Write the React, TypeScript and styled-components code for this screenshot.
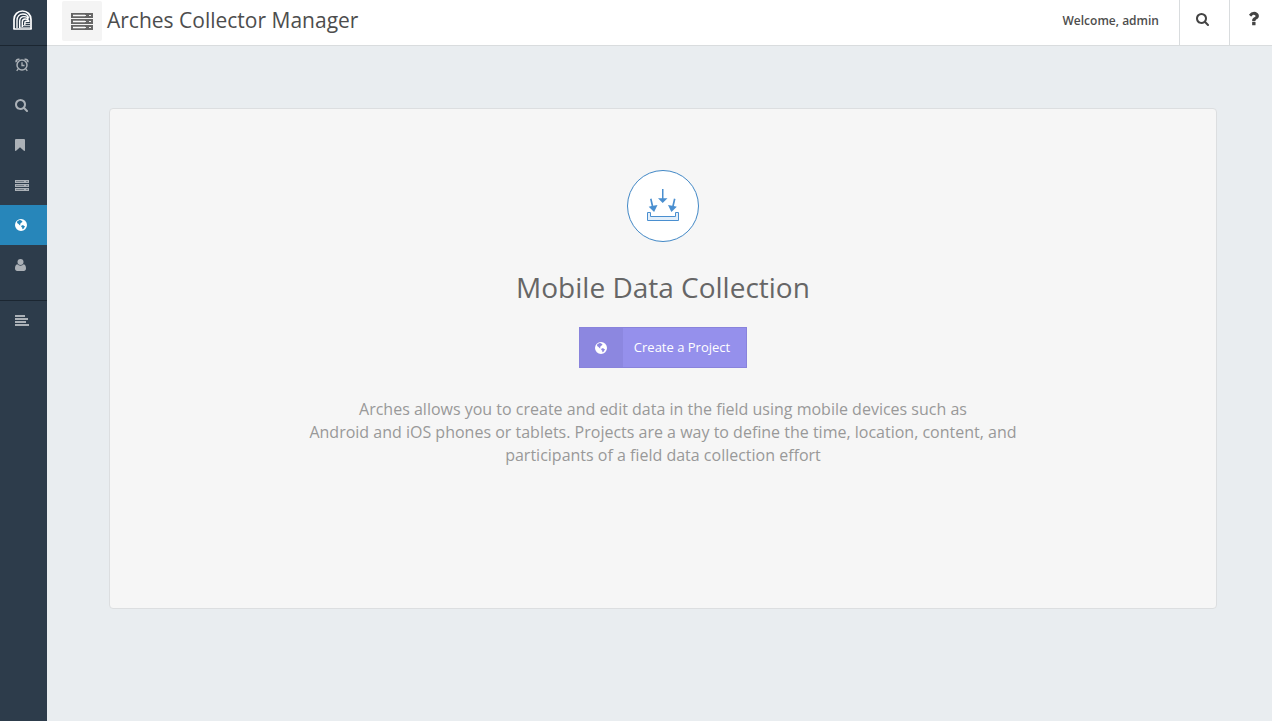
import React from "react";
import styled, { createGlobalStyle } from "styled-components";

const GlobalStyle = createGlobalStyle`
  *, *::before, *::after { box-sizing: border-box; }
  body {
    margin: 0;
    background: #e9edf0;
    color: #4d4d4d;
    font-family: "Open Sans", "Noto Sans", sans-serif;
    font-size: 13px;
  }
`;

const Shell = styled.div`
  display: flex;
  min-height: 100vh;
`;

const Sidebar = styled.nav`
  flex: 0 0 47px;
  background: #2d3c4b;
  color: #abb1b7;
`;

const Brand = styled.a`
  display: flex;
  height: 45px;
  padding: 10px 0 0 13px;
  color: #ffffff;
`;

const NavList = styled.ul`
  margin: 0;
  padding: 0;
  list-style: none;
  box-shadow: inset 0 1px 0 #1b2631;

  & + & {
    margin-top: 15px;
  }
`;

const NavLink = styled.a<{ $active?: boolean }>`
  display: flex;
  align-items: center;
  height: 40px;
  padding-left: 15px;
  color: ${(p) => (p.$active ? "#ffffff" : "inherit")};
  background: ${(p) => (p.$active ? "#2786ba" : "transparent")};
`;

const Content = styled.div`
  flex: 1;
  min-width: 0;
  display: flex;
  flex-direction: column;
`;

const Header = styled.header`
  display: flex;
  height: 46px;
  background: #ffffff;
  border-bottom: 1px solid #d9dcde;
`;

const HeaderIcon = styled.span`
  display: flex;
  align-items: center;
  justify-content: center;
  width: 40px;
  height: 40px;
  margin: 1px 5px 0 15px;
  border-radius: 2px;
  background: #f4f4f4;
  color: #666666;
`;

const PageTitle = styled.h1`
  flex: 1;
  margin: 0;
  font-size: 21px;
  font-weight: 400;
  line-height: 40px;
  white-space: nowrap;
`;

const Welcome = styled.span`
  padding-right: 20px;
  font-size: 12px;
  font-weight: 600;
  line-height: 41px;
  white-space: nowrap;
`;

const HeaderButton = styled.button<{ $width: number }>`
  display: flex;
  justify-content: center;
  width: ${(p) => p.$width}px;
  margin: 0;
  padding: 13px 4px 0 0;
  border: 0;
  border-left: 1px solid #d9dcde;
  background: transparent;
  color: #444444;
`;

const HelpButton = styled(HeaderButton)`
  padding: 9px 0 0 4px;
`;

const Main = styled.main`
  padding: 62px 55px 62px 62px;
`;

const Card = styled.section`
  display: flex;
  flex-direction: column;
  align-items: center;
  min-height: 501px;
  padding: 61px 20px;
  border: 1px solid #dcdee0;
  border-radius: 4px;
  background: #f6f6f6;
  text-align: center;
`;

const Badge = styled.div`
  display: flex;
  justify-content: center;
  width: 72px;
  height: 72px;
  padding-top: 18px;
  border: 1px solid #4288c6;
  border-radius: 50%;
  background: #ffffff;
  color: #4a8fd0;
`;

const CardTitle = styled.h2`
  margin: 25px 0 20px;
  color: #666666;
  font-size: 28px;
  font-weight: 400;
  line-height: 40px;
`;

const CreateButton = styled.button`
  display: flex;
  height: 41px;
  padding: 0;
  border: 1px solid #8983dc;
  background: #9590ec;
  color: #ffffff;
  font: inherit;
  line-height: 39px;
`;

const CreateIcon = styled.span`
  display: flex;
  align-items: center;
  justify-content: center;
  width: 43px;
  height: 39px;
  background: #8c87e0;
`;

const CreateLabel = styled.span`
  padding: 0 16px 0 11px;
`;

const Description = styled.p`
  max-width: 750px;
  margin: 30px 0 0;
  color: #999999;
  font-size: 16px;
  line-height: 23px;
`;

type IconProps = { size?: number };

const LogoIcon = () => (
  <svg width="19" height="20" viewBox="0 0 19 20" fill="none" stroke="currentColor" aria-hidden="true">
    <path d="M1 19V9.500C1 4.300 4.800 1 9.500 1S18 4.300 18 9.500V19" strokeWidth="1.700" />
    <path d="M4 18V10.500C4 6.700 6.500 4 10 4c2.800 0 5 1.700 5.500 4M6.700 18v-7c0-2.600 1.800-4.400 4.200-4.400 2.200 0 3.800 1 4.600 2.700M9.300 17v-5c0-1.800 1.200-3 2.900-3 1.500 0 2.800.6 3.600 1.700M11.800 15v-2c0-1 .7-1.700 1.700-1.700h3" strokeWidth="1.400" />
    <path d="M12 13.500h5M10 15.500h7M7 17.300h10" strokeWidth="1" opacity=".7" />
    <path d="M.3 19H18.700" strokeWidth="1.500" />
  </svg>
);

const ClockIcon = () => (
  <svg width="14" height="14" viewBox="0 0 14 14" fill="none" stroke="currentColor" aria-hidden="true">
    <circle cx="7" cy="7" r="5" strokeWidth="1.500" />
    <path d="M7 4.200v3.300h2.500M3.200 10.800l-1.500 2M10.800 10.800l1.500 2" strokeWidth="1.300" />
    <path d="M1.400 4.200C.6 2.300 2.500.7 4.500 1.500M12.600 4.200C13.400 2.300 11.500.7 9.500 1.500" strokeWidth="1.700" />
  </svg>
);

const SearchIcon = ({ size = 14 }: IconProps) => (
  <svg width={size} height={size} viewBox="64 128 1664 1664" fill="currentColor" aria-hidden="true">
    <path d="M1216 832q0-185-131.500-316.500t-316.500-131.500-316.500 131.500-131.500 316.500 131.500 316.500 316.500 131.500 316.500-131.500 131.500-316.500zm512 832q0 52-38 90t-90 38q-54 0-90-38l-343-342q-179 124-399 124-143 0-273.500-55.500t-225-150-150-225-55.500-273.500 55.500-273.500 150-225 225-150 273.500-55.500 273.500 55.500 225 150 150 225 55.500 273.500q0 220-124 399l343 343q37 37 37 90z" />
  </svg>
);

const QuestionIcon = () => (
  <svg width="19" height="19" viewBox="0 0 1792 1792" fill="currentColor" aria-hidden="true">
    <path d="M1088 1256v240q0 16-12 28t-28 12h-240q-16 0-28-12t-12-28v-240q0-16 12-28t28-12h240q16 0 28 12t12 28zm316-600q0 54-15.500 101t-35 76.500-55 59.500-57.500 43.500-61 35.500q-41 23-68.500 65t-27.500 67q0 17-12 32.500t-28 15.500h-240q-15 0-25.500-18.500t-10.500-37.500v-45q0-83 65-156.500t143-108.500q59-27 84-56t25-76q0-42-46.500-74t-107.500-32q-65 0-108 29-35 25-107 115-13 16-31 16-12 0-25-8l-164-125q-13-10-15.500-25t5.500-28q160-266 464-266 80 0 161 31t146 83 106 127.500 41 158.500z" />
  </svg>
);

const BookmarkIcon = () => (
  <svg width="10" height="12" viewBox="0 0 10 12" fill="currentColor" aria-hidden="true">
    <path d="M1 0h8a1 1 0 0 1 1 1v10.300c0 .6-.6.900-1.100.5L5 8.200l-3.900 3.600C.6 12.200 0 11.900 0 11.300V1a1 1 0 0 1 1-1z" />
  </svg>
);

const ServerIcon = () => (
  <svg width="22" height="17" viewBox="0 0 22 17" fill="currentColor" aria-hidden="true">
    {[0, 6, 12].map((y) => (
      <g key={y}>
        <path fillRule="evenodd" d={`M0 ${y}h22v5H0zM2 ${y + 2}v1h13v-1zM18 ${y + 2}v1h2v-1z`} />
        <path d={`M2 ${y + 1.500}h12v2H2z`} fill="#ffffff" opacity=".5" />
      </g>
    ))}
  </svg>
);

const SmallServerIcon = () => (
  <svg width="14" height="11" viewBox="0 0 14 11" fill="currentColor" aria-hidden="true">
    {[0, 4, 8].map((y) => (
      <g key={y}>
        <path d={`M0 ${y}h14v3H0z`} />
        <path d={`M1 ${y + 1}h8v1H1zM11 ${y + 1}h2v1h-2z`} fill="#2d3c4b" opacity=".45" />
      </g>
    ))}
  </svg>
);

const GlobeIcon = () => (
  <svg width="12" height="12" viewBox="0 0 12 12" fill="currentColor" aria-hidden="true">
    <path
      fillRule="evenodd"
      d="M6 0a6 6 0 1 1 0 12A6 6 0 0 1 6 0zM2.700 1.900L1.900 3l.5 1.300 1.200.6.8 1.200.8.300.2-.8-.6-.7.800-.5.900-.9.900-.6-.2-.9-.8-.2-.3-.6-1.500-.3zM7.100 6.300l-.9.600.1 1.100.9.500.2 1.800 1.400-.8.6-1.200.7-1-1-.4-.8-.6z"
    />
  </svg>
);

const UserIcon = () => (
  <svg width="11" height="12" viewBox="0 0 11 12" fill="currentColor" aria-hidden="true">
    <circle cx="5.500" cy="3" r="3" />
    <path d="M2.300 5.200C.6 5.400 0 7.300 0 9.600 0 11 .9 12 2.200 12h6.600c1.300 0 2.200-1 2.200-2.400 0-2.300-.6-4.200-2.300-4.400a4.300 4.300 0 0 1-6.400 0z" />
  </svg>
);

const LinesIcon = () => (
  <svg width="14" height="11" viewBox="0 0 14 11" fill="currentColor" aria-hidden="true">
    <path d="M0 0h10v2H0zM0 3h13v2H0zM0 6h11v2H0zM0 9h14v2H0z" />
  </svg>
);

const CollectIcon = () => (
  <svg width="32" height="32" viewBox="0 0 32 32" fill="currentColor" aria-hidden="true">
    <path d="M15 0h1.500v9.300H20.500L15.700 14 11 9.300h4z" />
    <path d="M3 10l1.600-.4 1.700 7.200 4.200-.9-3.400 7.200-5.400-5.300 2.900-.7zM28.500 10l-1.600-.4-1.700 7.200-4.200-.9 3.400 7.200 5.400-5.300-2.900-.7z" />
    <path d="M.5 23.500h3v4h25v-4h3v8H.5z" fill="#e3effa" stroke="currentColor" strokeWidth="1" />
  </svg>
);

const primaryLinks = [
  { label: "Recent", icon: <ClockIcon /> },
  { label: "Search", icon: <SearchIcon size={13} /> },
  { label: "Bookmarks", icon: <BookmarkIcon /> },
  { label: "Resources", icon: <SmallServerIcon /> },
  { label: "Collector", icon: <GlobeIcon />, active: true },
  { label: "Profile", icon: <UserIcon /> },
];

export default function App() {
  return (
    <>
      <GlobalStyle />
      <Shell>
        <Sidebar aria-label="Main">
          <Brand href="#" aria-label="Arches"><LogoIcon /></Brand>
          <NavList>
            {primaryLinks.map(({ label, icon, active }) => (
              <li key={label}>
                <NavLink href="#" aria-label={label} $active={active}>{icon}</NavLink>
              </li>
            ))}
          </NavList>
          <NavList>
            <li><NavLink href="#" aria-label="Menu"><LinesIcon /></NavLink></li>
          </NavList>
        </Sidebar>
        <Content>
          <Header>
            <HeaderIcon><ServerIcon /></HeaderIcon>
            <PageTitle>Arches Collector Manager</PageTitle>
            <Welcome>Welcome, admin</Welcome>
            <HeaderButton type="button" aria-label="Search" $width={50}><SearchIcon size={13} /></HeaderButton>
            <HelpButton type="button" aria-label="Help" $width={43}><QuestionIcon /></HelpButton>
          </Header>
          <Main>
            <Card>
              <Badge><CollectIcon /></Badge>
              <CardTitle>Mobile Data Collection</CardTitle>
              <CreateButton type="button">
                <CreateIcon><GlobeIcon /></CreateIcon>
                <CreateLabel>Create a Project</CreateLabel>
              </CreateButton>
              <Description>
                Arches allows you to create and edit data in the field using mobile devices such as
                <br />
                Android and iOS phones or tablets. Projects are a way to define the time, location, content, and
                participants of a field data collection effort
              </Description>
            </Card>
          </Main>
        </Content>
      </Shell>
    </>
  );
}
